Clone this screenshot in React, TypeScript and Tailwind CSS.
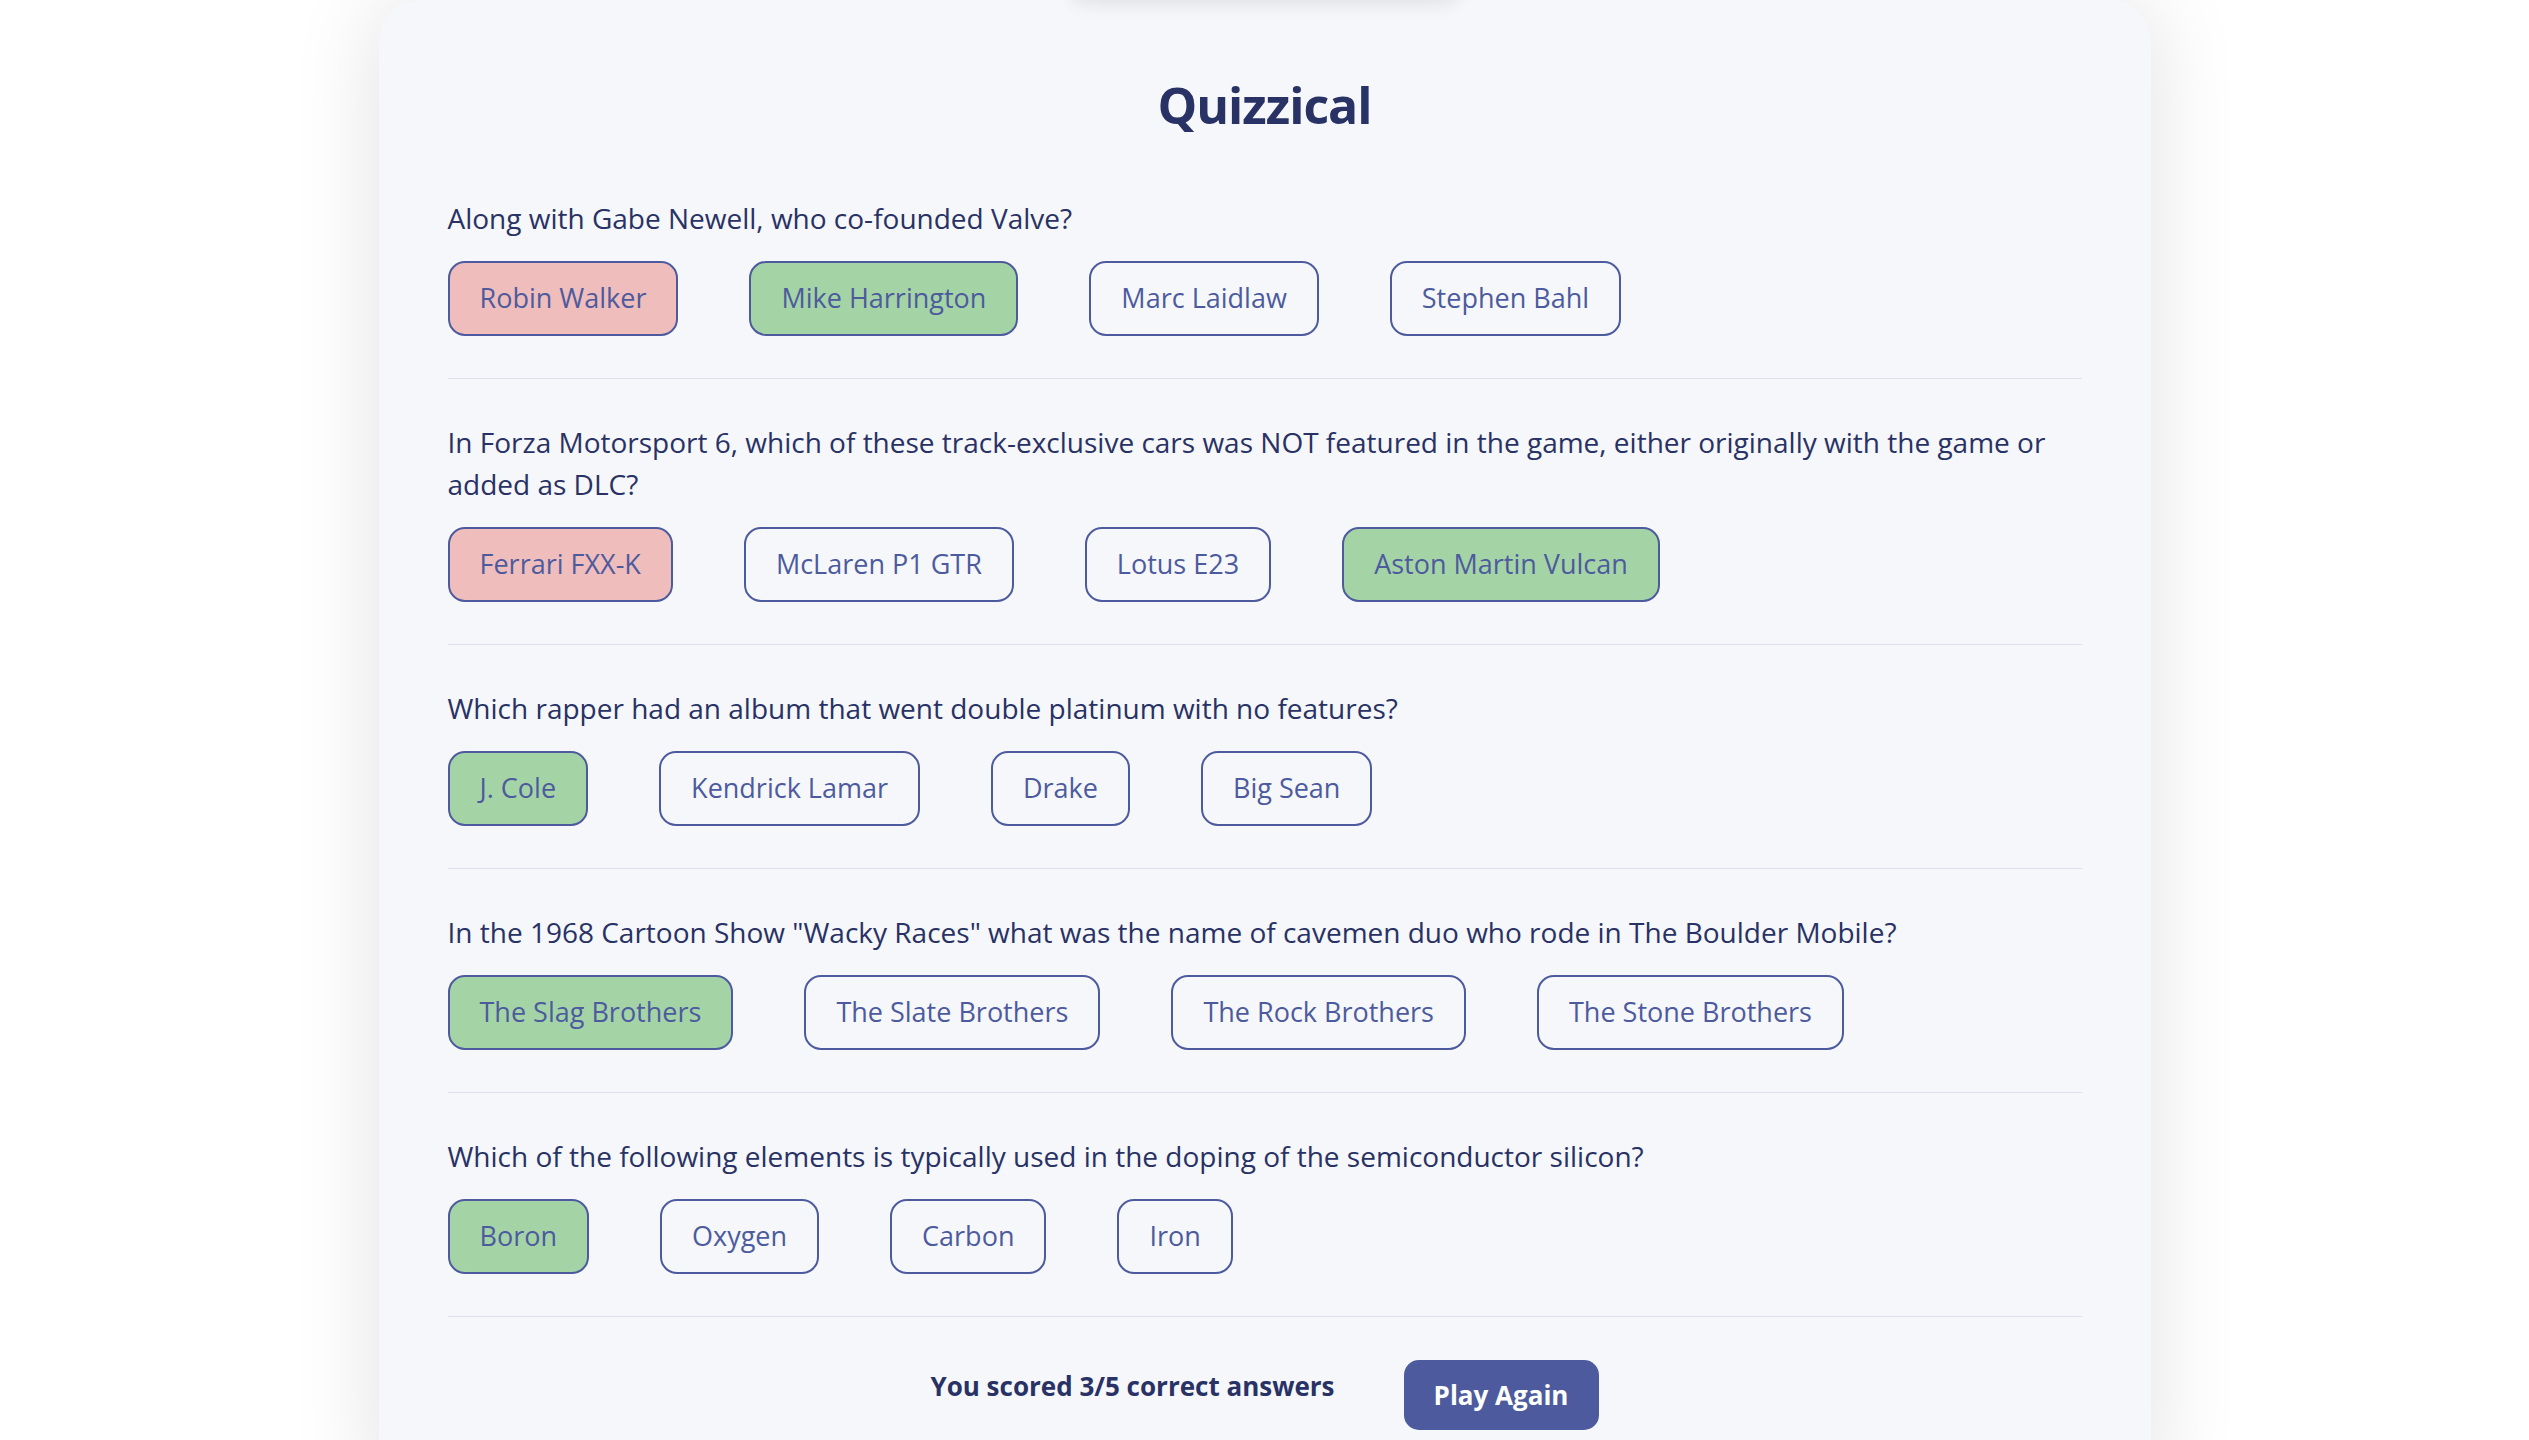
import React from "react";

type Status = "wrong" | "correct" | "none";

interface Answer {
  text: string;
  status: Status;
}

interface Question {
  question: string;
  answers: Answer[];
}

const questions: Question[] = [
  {
    question: "Along with Gabe Newell, who co-founded Valve?",
    answers: [
      { text: "Robin Walker", status: "wrong" },
      { text: "Mike Harrington", status: "correct" },
      { text: "Marc Laidlaw", status: "none" },
      { text: "Stephen Bahl", status: "none" },
    ],
  },
  {
    question:
      "In Forza Motorsport 6, which of these track-exclusive cars was NOT featured in the game, either originally with the game or added as DLC?",
    answers: [
      { text: "Ferrari FXX-K", status: "wrong" },
      { text: "McLaren P1 GTR", status: "none" },
      { text: "Lotus E23", status: "none" },
      { text: "Aston Martin Vulcan", status: "correct" },
    ],
  },
  {
    question:
      "Which rapper had an album that went double platinum with no features?",
    answers: [
      { text: "J. Cole", status: "correct" },
      { text: "Kendrick Lamar", status: "none" },
      { text: "Drake", status: "none" },
      { text: "Big Sean", status: "none" },
    ],
  },
  {
    question:
      'In the 1968 Cartoon Show "Wacky Races" what was the name of cavemen duo who rode in The Boulder Mobile?',
    answers: [
      { text: "The Slag Brothers", status: "correct" },
      { text: "The Slate Brothers", status: "none" },
      { text: "The Rock Brothers", status: "none" },
      { text: "The Stone Brothers", status: "none" },
    ],
  },
  {
    question:
      "Which of the following elements is typically used in the doping of the semiconductor silicon?",
    answers: [
      { text: "Boron", status: "correct" },
      { text: "Oxygen", status: "none" },
      { text: "Carbon", status: "none" },
      { text: "Iron", status: "none" },
    ],
  },
];

const statusClass: Record<Status, string> = {
  wrong: "bg-[#F0BDBD]",
  correct: "bg-[#A4D4A6]",
  none: "bg-transparent",
};

export default function App() {
  return (
    <div className="min-h-screen bg-white flex justify-center font-['Open_Sans','Noto_Sans',sans-serif]">
      <main className="relative w-[1772px] rounded-t-[40px] bg-[#F5F7FB] px-[69px] pt-[75px] pb-[60px] shadow-[0_0_90px_rgba(0,0,0,0.12)]">
        {/* faint shadow of something above the card */}
        <div className="absolute left-1/2 -translate-x-1/2 -top-[30px] w-[390px] h-[30px] rounded-full bg-white shadow-[0_4px_18px_rgba(0,0,0,0.09)]" />

        <h1 className="text-center text-[50px] leading-[60px] font-bold tracking-[-1px] text-[#293264] mb-[20px]">
          Quizzical
        </h1>

        {questions.map((q) => (
          <section
            key={q.question}
            className="pt-[42px] pb-[42px] border-b border-[#DFE2EE]"
          >
            <h2 className="text-[28px] leading-[42px] font-normal text-[#293264]">
              {q.question}
            </h2>
            <div className="mt-[22px] flex gap-[71px]">
              {q.answers.map((a) => (
                <button
                  key={a.text}
                  type="button"
                  className={`h-[75px] px-[30px] flex items-center rounded-[17px] border-2 border-[#4D5B9E] text-[27px] font-medium text-[#4D5B9E] ${statusClass[a.status]}`}
                >
                  {a.text}
                </button>
              ))}
            </div>
          </section>
        ))}

        <div className="pt-[43px] flex items-center justify-center gap-[69px]">
          <p className="text-[26px] leading-[42px] font-bold text-[#293264] mb-[19px]">
            You scored 3/5 correct answers
          </p>
          <button
            type="button"
            className="w-[195px] h-[70px] rounded-[15px] bg-[#4D5B9E] text-white text-[26px] font-bold"
          >
            Play Again
          </button>
        </div>
      </main>
    </div>
  );
}
